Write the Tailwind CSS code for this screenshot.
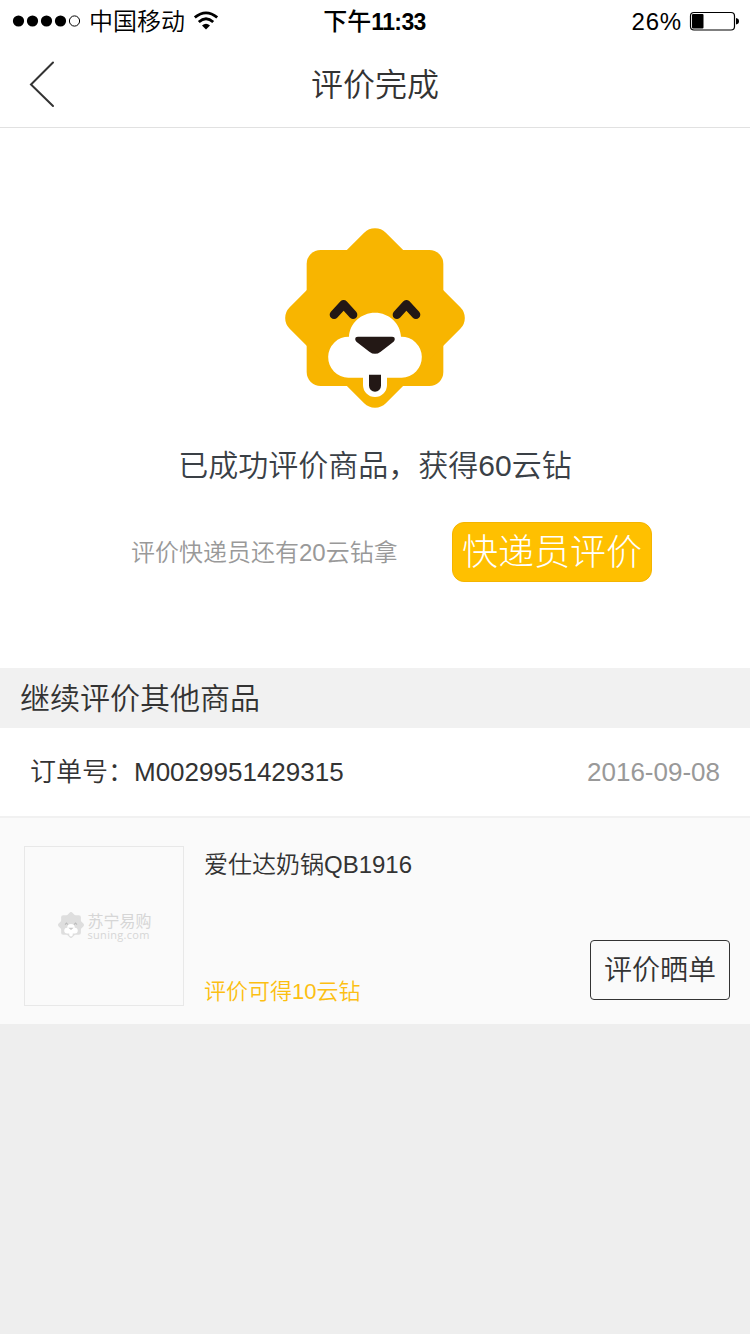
<!DOCTYPE html>
<html lang="zh-CN">
<head>
<meta charset="utf-8">
<title>评价完成</title>
<script src="https://cdn.jsdelivr.net/npm/@tailwindcss/browser@4"></script>
</head>
<body class="w-[750px] h-[1334px] overflow-hidden bg-[#eeeeee] text-[#333333] font-[350] font-['Liberation_Sans','Noto_Sans_CJK_SC',sans-serif]">
<header class="h-32 bg-white border-b border-[#e1e1e1] flex flex-col">
  <div class="h-10 grid grid-cols-3 items-center text-2xl/10 text-black">
    <div class="flex items-center pl-3">
      <svg class="w-[70px] h-3" viewBox="0 0 70 12"><circle cx="6.5" cy="6" r="5.6"/><circle cx="20.5" cy="6" r="5.6"/><circle cx="34.5" cy="6" r="5.6"/><circle cx="48.5" cy="6" r="5.6"/><circle cx="62.5" cy="6" r="5.1" fill="none" stroke="#000"/></svg>
      <span class="ml-[7px] pt-px whitespace-nowrap">中国移动</span>
      <svg class="ml-[9px] w-6 h-5 shrink-0" viewBox="0 0 24 20" fill="none" stroke="#000" stroke-width="2.8"><path d="M.8 6.5Q12-2.8 23.2 6.5"/><path d="M4.8 11Q12 4.6 19.2 11"/><path d="M12 18.6L8 14.5Q12 11.2 16 14.5Z" fill="#000" stroke="none"/></svg>
    </div>
    <div class="text-center font-medium whitespace-nowrap pr-px pt-px">下午<span class="font-bold text-[23px] tracking-[-0.6px]">11:33</span></div>
    <div class="flex items-center justify-end pr-[11px]">
      <span class="tracking-[0.8px] pt-0.5">26%</span>
      <svg class="ml-[7px] w-[50px] h-5 mb-px" viewBox="0 0 50 20"><rect x="1.5" y="1.5" width="44" height="17.5" rx="3.5" fill="none" stroke="#000" stroke-width="1.2"/><rect x="3" y="3" width="11.5" height="14.5" rx="1"/><path d="M47 7Q50 7.500 50 10.200T47 13.500Z"/></svg>
    </div>
  </div>
  <div class="flex-1 grid grid-cols-3 items-center">
    <svg class="ml-7 w-7 h-12" viewBox="0 0 28 48" fill="none" stroke="#333" stroke-width="2" stroke-linecap="round"><path d="M25 2.500L3 24.500L25 46"/></svg>
    <h1 class="text-center text-[32px]/[48px] pt-0.5">评价完成</h1>
  </div>
</header>
<main>
  <section class="h-[540px] bg-white flex flex-col items-center pt-[100px]">
    <svg class="w-[180px] h-[180px]" viewBox="30 24 540 540">
      <g fill="#f8b500"><rect x="95" y="90" width="410" height="408" rx="42"/><rect x="96" y="90" width="408" height="408" rx="46" transform="rotate(45 300 294)"/></g>
      <g fill="none" stroke="#231815" stroke-width="26" stroke-linecap="round" stroke-linejoin="round"><path d="M177 284L206 253L234 284"/><path d="M366 284L394 253L423 284"/></g>
      <path fill="#fff" d="M222 350C224 310 258 278 300 278S376 310 378 350A61 61 0 0 1 380 473H336V495A36 36 0 0 1 264 495V473H220A61 61 0 0 1 222 350Z"/>
      <path fill="#231815" d="M249 350H351Q361 350 359 360Q358 364 351 369L317 395Q300 408 283 395L249 369Q242 364 241 360Q239 350 249 350Z"/>
      <path fill="#231815" d="M282 464H318V497A18 18 0 0 1 282 497Z"/>
    </svg>
    <p class="mt-9 text-[30px]/[44px] text-[#3a4046]">已成功评价商品，获得60云钻</p>
    <div class="mt-[34px] w-full pl-[131px] flex items-center">
      <span class="text-2xl/9 text-[#999999] w-[321px] pt-0.5">评价快递员还有20云钻拿</span>
      <button class="w-[200px] h-[60px] rounded-xl bg-[#ffc000] border border-[#f5b400] text-white text-4xl/[56px] pt-0.5 font-light whitespace-nowrap">快递员评价</button>
    </div>
  </section>
  <h2 class="h-[60px] bg-[#f1f1f1] pl-5 text-[30px]/[62px]">继续评价其他商品</h2>
  <div class="h-[88px] bg-white px-[30px] flex items-center justify-between text-[26px]/10">
    <span>订单号：M0029951429315</span><span class="text-[#999999]">2016-09-08</span>
  </div>
  <article class="h-[208px] bg-[#fafafa] border-t-2 border-[#f1f1f1] flex pl-6 pr-5 pt-7">
    <div class="w-40 h-40 border border-[#e8e8e8] flex items-center justify-center">
      <svg class="w-[26px] h-[26px] mr-1 mb-0.5" viewBox="30 24 540 540">
        <g fill="#dedede"><rect x="95" y="90" width="410" height="408" rx="42"/><rect x="98" y="92" width="404" height="404" rx="42" transform="rotate(45 300 294)"/></g>
        <g fill="none" stroke="#bbb" stroke-width="22"><path d="M176 286L206 252L235 286"/><path d="M365 286L394 252L424 286"/></g>
        <path fill="#fff" d="M222 350A78 78 0 0 1 378 350A61 61 0 0 1 380 473H336V495A36 36 0 0 1 264 495V473H220A61 61 0 0 1 222 350Z"/>
        <path fill="#c8c8c8" d="M245 350H355L300 400Z"/>
      </svg>
      <div class="text-[#d6d6d6] font-normal w-[63px] whitespace-nowrap">
        <div class="text-[16px]/[17px]">苏宁易购</div>
        <div class="text-[11px]/[10px] font-['Open_Sans','Liberation_Sans',sans-serif] font-medium tracking-[0.3px]">suning.com</div>
      </div>
    </div>
    <div class="ml-5 h-40 flex-1 flex flex-col justify-between">
      <h3 class="text-2xl/[38px]">爱仕达奶锅QB1916</h3>
      <p class="text-[22px]/[28px] text-[#fcbf12]">评价可得10云钻</p>
    </div>
    <button class="self-start mt-[94px] w-[140px] h-[60px] rounded border border-[#333333] text-[28px]/[56px] pt-0.5 font-[350]">评价晒单</button>
  </article>
</main>
</body>
</html>
